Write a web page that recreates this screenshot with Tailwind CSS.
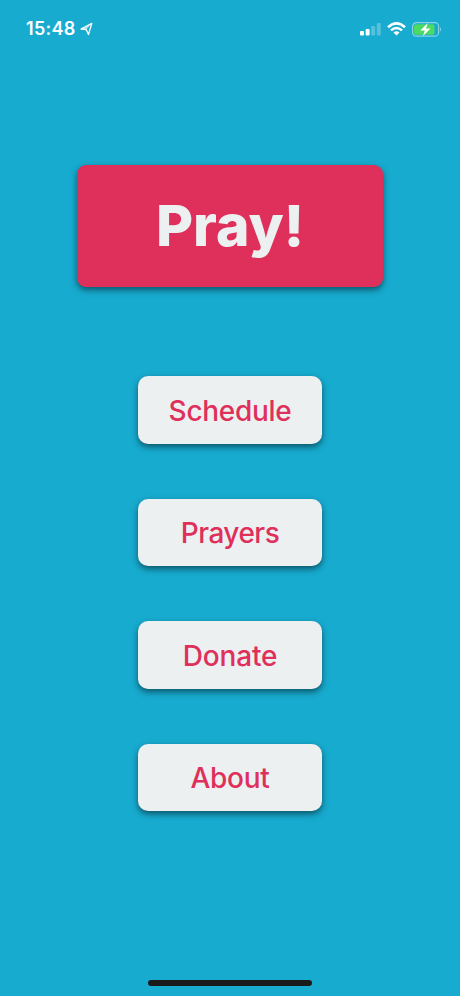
<!DOCTYPE html>
<html lang="en"><head><meta charset="utf-8"><title>Pray!</title>
<script src="https://cdn.jsdelivr.net/npm/@tailwindcss/browser@4"></script></head>
<body class="bg-[#17abcf] font-['Inter',sans-serif]">
<main class="w-[460px] h-[996px] flex flex-col items-center overflow-hidden">
<header class="w-full h-[165px] shrink-0 flex items-start justify-between pt-[18px] pl-[26px] pr-[18px] text-white">
<div class="flex items-center gap-[4px] h-[22px]"><span class="text-[18px] leading-[22px] font-semibold tracking-[0.3px]">15:48</span>
<svg class="w-[13px] h-[14px]" viewBox="0 0 13 14" fill="none" stroke="white" stroke-width="1.3" stroke-linejoin="round"><path d="M11.800 1.300 1 7 6.300 7.700 8.500 12.500Z"/><path d="M1 7 11.800 1.300 6.300 7.700Z" fill="white" fill-opacity=".6" stroke="none"/></svg></div>
<div class="flex items-center gap-[6px] h-[22px]">
<svg class="w-[21px] h-[14px]" viewBox="0 0 21 14" fill="white"><rect y="9" width="4" height="4.500" rx="1"/><rect x="5.6" y="7" width="4" height="6.500" rx="1"/><rect x="11.2" y="4" width="4" height="9.500" rx="1" opacity=".27"/><rect x="16.8" y="1" width="4" height="12.500" rx="1" opacity=".27"/></svg>
<svg class="w-[19px] h-[14px]" viewBox="0 0 19 14" fill="none" stroke="white" stroke-width="2.5"><path d="M1 5.200Q9.500-2.500 18 5.200M4 8.400Q9.500 3.500 15 8.400"/><path d="M6.500 10.500Q9.500 8 12.500 10.500L9.500 13.500Z" fill="white" stroke="none"/></svg>
<svg class="w-[30px] h-[15px]" viewBox="0 0 30 15"><rect x=".6" y=".6" width="26" height="13.600" rx="3.800" fill="none" stroke="white" stroke-width="1.200" stroke-opacity=".48"/><rect x="2" y="2.200" width="20.500" height="10.500" rx="2" fill="#4cd964"/><path d="M28 5.300v4.400q2-2.200 0-4.400" fill="white" opacity=".5"/><path d="m15.800 1-7.500 7.500h4.500L11 14l7.500-7.500H14Z" fill="white"/></svg>
</div></header>
<button class="w-[306px] h-[122px] shrink-0 rounded-[9px] bg-[#df305b] text-[#ecf0f1] text-[57px] font-extrabold shadow-[0_3px_6px_rgba(0,0,0,.5)]">Pray!</button>
<nav class="mt-[89px] flex flex-col gap-[55px] text-[#df305b] text-[28px] font-medium">
<button class="w-[184px] h-[67.5px] rounded-[10px] bg-[#ecf0f1] shadow-[0_3px_6px_rgba(0,0,0,.5)]"><span class="relative top-px tracking-[-0.3px]">Schedule</span></button>
<button class="w-[184px] h-[67.5px] rounded-[10px] bg-[#ecf0f1] shadow-[0_3px_6px_rgba(0,0,0,.5)]"><span class="relative top-px tracking-[-0.5px]">Prayers</span></button>
<button class="w-[184px] h-[67.5px] rounded-[10px] bg-[#ecf0f1] shadow-[0_3px_6px_rgba(0,0,0,.5)]"><span class="relative top-px tracking-[-0.2px]">Donate</span></button>
<button class="w-[184px] h-[67.5px] rounded-[10px] bg-[#ecf0f1] shadow-[0_3px_6px_rgba(0,0,0,.5)]"><span class="relative top-px tracking-[-0.3px]">About</span></button>
</nav>
<div class="mt-auto mb-[10px] w-[164px] h-[6px] rounded-full bg-[#1a1a1a]"></div>
</main></body></html>
